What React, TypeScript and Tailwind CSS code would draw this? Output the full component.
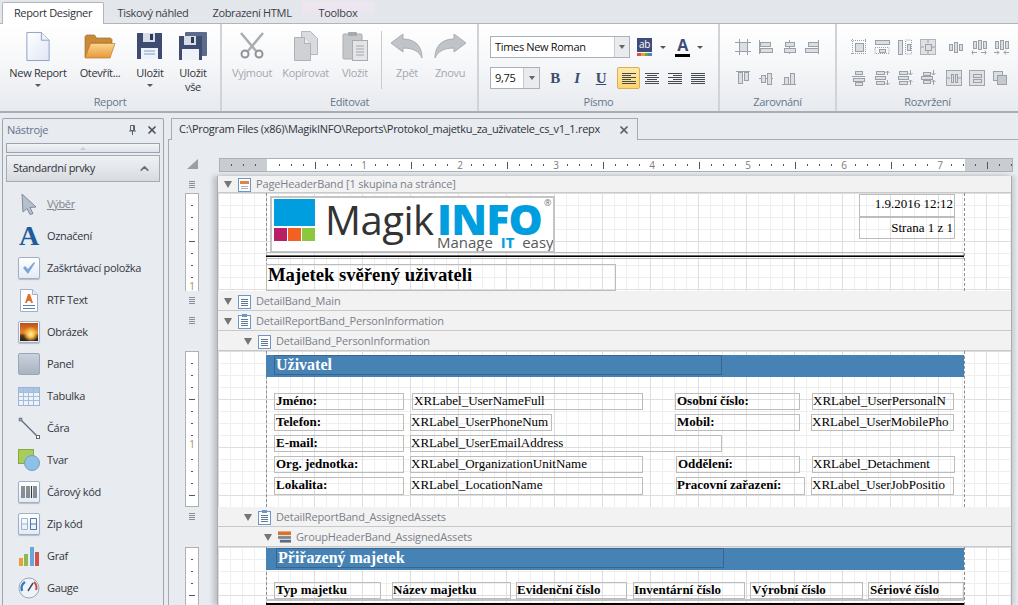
import React from "react"
import { ChevronUp, X } from "lucide-react"

const ui = "font-['Open_Sans','Noto_Sans',sans-serif]"
const serif = "font-['Liberation_Serif','Times_New_Roman',serif]"

// ---------- big ribbon icons ----------
const NewDoc = () => (
  <svg width="26" height="31" viewBox="0 0 26 32">
    <defs>
      <linearGradient id="nd" x1="0" y1="0" x2="1" y2="1">
        <stop offset="0" stopColor="#ffffff" />
        <stop offset="1" stopColor="#dfe6f5" />
      </linearGradient>
    </defs>
    <path d="M1.5 1.5h15l8 8v21h-23z" fill="url(#nd)" stroke="#8f9fc6" />
    <path d="M16.5 1.5v8h8" fill="#eef2fa" stroke="#8f9fc6" />
  </svg>
)

const Folder = () => (
  <svg width="32" height="26" viewBox="0 0 32 26">
    <defs>
      <linearGradient id="fo" x1="0" y1="0" x2="0" y2="1">
        <stop offset="0" stopColor="#fbd68d" />
        <stop offset="1" stopColor="#e8973a" />
      </linearGradient>
    </defs>
    <path d="M1 24V3.5L2.5 2h8l2 3h14l1.500 1.500V10H7z" fill="#c98a3a" stroke="#a86d24" strokeWidth=".7" />
    <path d="M1 25L6.500 10.500H31L26 25z" fill="url(#fo)" stroke="#b97a2c" strokeWidth=".7" />
  </svg>
)

const Floppy = ({ back }: { back?: boolean }) => (
  <svg width="28" height="28" viewBox="0 0 28 28">
    {back && <rect x="6" y="0" width="22" height="24" rx="1" fill="#5c6a8c" />}
    <path d={back ? "M0 4h23v24H0z" : "M1 1h25v26H1z"} fill="#3d4c70" />
    <rect x={back ? 5 : 7} y={back ? 4 : 1} width="12" height="9" fill="#d7dce6" />
    <rect x={back ? 12 : 14} y={back ? 5 : 2} width="3" height="6" fill="#2d3955" />
    <rect x={back ? 3 : 5} y={back ? 17 : 16} width="17" height="11" fill="#eef2f9" />
    {!back && <path d="M8 19h11M8 22h11" stroke="#7f9ccc" />}
  </svg>
)

const Scissors = () => (
  <svg width="28" height="28" viewBox="0 0 28 28" fill="none">
    <path d="M3 1l15 18M25 1L10 19" stroke="#a9adb2" strokeWidth="2.500" />
    <circle cx="7" cy="22" r="3.500" stroke="#8e9398" strokeWidth="2" />
    <circle cx="21" cy="22" r="3.500" stroke="#8e9398" strokeWidth="2" />
  </svg>
)

const CopyIcon = () => (
  <svg width="26" height="30" viewBox="0 0 26 30">
    <path d="M8.500 .5h9l7 7v16h-16z" fill="#d9dbde" stroke="#b4b7bb" />
    <path d="M1.500 6.500h10l6 6v17h-16z" fill="#cfd2d5" stroke="#aeb1b5" />
    <path d="M11.500 6.500v6h6" fill="#eceef0" stroke="#aeb1b5" />
  </svg>
)

const PasteIcon = () => (
  <svg width="26" height="30" viewBox="0 0 26 30">
    <rect x="1" y="3" width="19" height="25" rx="1" fill="#c5c8cb" stroke="#aaadb1" />
    <rect x="6" y="1" width="9" height="4" rx="1" fill="#a6a9ad" />
    <rect x="10.500" y="9.500" width="15" height="20" fill="#e3e5e7" stroke="#a8abaf" />
    <path d="M14 15h8M14 18h8M14 21h8M14 24h8" stroke="#a4a7ab" />
  </svg>
)

const Undo = ({ flip }: { flip?: boolean }) => (
  <svg width="32" height="24" viewBox="0 0 32 24" className={flip ? "-scale-x-100" : ""}>
    <path d="M0 9L12 0v5c12 0 19 7 19 19-3-7-9-10-19-10v4z" fill="#c0c3c7" stroke="#a9acb0" />
  </svg>
)

const BigBtn = ({ w, icon, label, line2, arrow, off }: { w: string; icon: React.ReactNode; label: string; line2?: string; arrow?: boolean; off?: boolean }) => (
  <div className={`${w} flex flex-col items-center ${off ? "text-[#a3a8af]" : "text-[#2f3338]"}`}>
    <div className="h-[32px] flex items-center justify-center">{icon}</div>
    <div className="mt-[4px] leading-[14px] whitespace-nowrap">{label}</div>
    {line2 && <div className="leading-[14px]">{line2}</div>}
    {arrow && <div className="mt-[4px] w-0 h-0 border-x-[3px] border-x-transparent border-t-[3px] border-t-[#555]" />}
  </div>
)

// ---------- small grey layout icons ----------
const B = ({ x, y, w, h }: { x: number; y: number; w: number; h: number }) => (
  <rect x={x + 0.5} y={y + 0.5} width={w} height={h} fill="#dcdfe2" stroke="#9aa0a7" />
)
const L = ({ d }: { d: string }) => <path d={d} stroke="#9aa0a7" fill="none" />
const Dots = ({ d }: { d: string }) => <path d={d} stroke="#9aa0a7" fill="none" strokeDasharray="1 1" />

const Small = ({ children }: { children: React.ReactNode }) => (
  <div className="w-[23px] flex justify-center">
    <svg width="16" height="16" viewBox="0 0 16 16">
      {children}
    </svg>
  </div>
)

const alignRow1 = [
  <><B x={4} y={3} w={8} h={9} /><L d="M0 3.500h16M0 12.500h16M4.500 0v16M12.500 0v16" /></>,
  <><L d="M1.500 1v14" /><B x={2} y={3} w={10} h={4} /><B x={2} y={9} w={12} h={4} /></>,
  <><L d="M8.500 1v14" /><B x={4} y={3} w={9} h={4} /><B x={3} y={9} w={11} h={4} /></>,
  <><L d="M14.500 1v14" /><B x={4} y={3} w={10} h={4} /><B x={1} y={9} w={13} h={4} /></>,
]
const alignRow2 = [
  <><L d="M1 1.500h14" /><B x={3} y={2} w={4} h={11} /><B x={9} y={2} w={4} h={8} /></>,
  <><L d="M1 8.500h14" /><B x={3} y={5} w={4} h={7} /><B x={9} y={3} w={4} h={11} /></>,
  <><L d="M1 14.500h14" /><B x={3} y={7} w={4} h={7} /><B x={9} y={3} w={4} h={11} /></>,
]
const layoutRow1 = [
  <><B x={4} y={4} w={8} h={8} /><Dots d="M0 1.500h16M0 14.500h16M1.500 0v16M14.500 0v16" /></>,
  <><B x={1} y={1} w={14} h={4} /><Dots d="M1 8.500h14v6H1z" /><B x={5} y={10} w={6} h={3} /></>,
  <><B x={1} y={1} w={4} h={14} /><Dots d="M8.500 1h6v14h-6z" /><B x={10} y={5} w={3} h={6} /></>,
  <><rect x=".5" y=".5" width="15" height="15" fill="#dfe1e4" stroke="#b0b4b9" /><B x={5} y={5} w={6} h={6} /><L d="M8 1v3M8 12v3M1 8h3M12 8h3" /></>,
  <><B x={1} y={5} w={3} h={6} /><B x={6} y={3} w={3} h={10} /><B x={11} y={5} w={3} h={6} /></>,
  <><B x={2} y={2} w={3} h={7} /><B x={7} y={1} w={3} h={9} /><B x={12} y={2} w={3} h={7} /><L d="M1 13.500h5M10 13.500h5M2 11.500l-1 2 1 2M14 11.500l1 2-1 2" /></>,
  <><B x={1} y={2} w={3} h={7} /><B x={6} y={1} w={3} h={9} /><B x={11} y={2} w={3} h={7} /><L d="M0 13.500h5M10 13.500h5M3 11.500l2 2-2 2M12 11.500l-2 2 2 2" /></>,
]
const layoutRow2 = [
  <><B x={4} y={1} w={7} h={3} /><L d="M1 6.500h13" /><B x={2} y={8} w={11} h={3} /><B x={4} y={12} w={7} h={3} /></>,
  <><B x={2} y={1} w={8} h={3} /><B x={1} y={6} w={10} h={3} /><B x={2} y={11} w={8} h={3} /><L d="M13.500 5V1M11.500 3l2-2 2 2M13.500 10v5M11.500 13l2 2 2-2" /></>,
  <><B x={2} y={1} w={8} h={3} /><B x={1} y={6} w={10} h={3} /><B x={2} y={11} w={8} h={3} /><L d="M13.500 0v5M11.500 3l2 2 2-2M13.500 15v-5M11.500 12l2-2 2 2" /></>,
  <><B x={3} y={2} w={7} h={3} /><B x={1} y={6} w={11} h={3} /><B x={3} y={10} w={7} h={3} /><L d="M13.500 0v5M11.500 3l2 2 2-2M13.500 15v-5M11.500 12l2-2 2 2" /></>,
  <><rect x=".5" y=".5" width="15" height="15" fill="#dfe1e4" stroke="#a0a5ab" /><B x={5} y={4} w={2} h={8} /><B x={9} y={4} w={2} h={8} /><L d="M1 8h3M12 8h3" /></>,
  <><rect x=".5" y=".5" width="15" height="15" fill="#dfe1e4" stroke="#a0a5ab" /><B x={4} y={4} w={8} h={3} /><B x={4} y={9} w={8} h={3} /></>,
  <><B x={1} y={1} w={9} h={9} /><rect x="5.500" y="5.500" width="9" height="9" fill="#c6cacf" stroke="#9aa0a7" /></>,
]

const FormatBtn = ({ children, active }: { children: React.ReactNode; active?: boolean }) => (
  <div className={`w-[23px] h-[22px] flex items-center justify-center ${active ? "bg-[linear-gradient(#ffe9a6,#fdd56e)] border border-[#d9ae5c] rounded-[2px]" : ""}`}>
    {children}
  </div>
)

const AlignLines = ({ rows }: { rows: string[] }) => (
  <svg width="14" height="11" viewBox="0 0 14 11">
    {rows.map((d, i) => (
      <path key={i} d={d} transform={`translate(0 ${i * 2 + 0.5})`} stroke="#444b55" fill="none" />
    ))}
  </svg>
)

const Group = ({ w, title, children, last }: { w: string; title: string; children: React.ReactNode; last?: boolean }) => (
  <div className={`${w} h-full flex flex-col justify-between ${last ? "" : "border-r-2 border-r-[#d0d4d9]"}`}>
    <div>{children}</div>
    <div className="h-[17px] text-center leading-[15px] text-[#66778a]">{title}</div>
  </div>
)

const Ribbon = () => (
  <div className="h-[89px] flex border-b-2 border-b-[#a9aeb5] bg-[linear-gradient(#ffffff,#f6f7f9_45%,#e7eaee)]">
    <Group w="w-[222px]" title="Report">
      <div className="flex pl-[4px] pt-[6px]">
        <BigBtn w="w-[68px]" icon={<NewDoc />} label="New Report" arrow />
        <BigBtn w="w-[56px]" icon={<Folder />} label="Otevřít..." />
        <BigBtn w="w-[44px]" icon={<Floppy />} label="Uložit" arrow />
        <BigBtn w="w-[42px]" icon={<Floppy back />} label="Uložit" line2="vše" />
      </div>
    </Group>
    <Group w="w-[257px]" title="Editovat">
      <div className="flex pl-[8px] pt-[6px] text-[#a3a8af]">
        <BigBtn w="w-[44px]" icon={<Scissors />} label="Vyjmout" off />
        <BigBtn w="w-[63px]" icon={<CopyIcon />} label="Kopírovat" off />
        <BigBtn w="w-[36px]" icon={<PasteIcon />} label="Vložit" off />
        <div className="ml-[8px] mr-[8px] mt-[1px] w-px h-[58px] bg-[#c8ccd1]" />
        <BigBtn w="w-[34px]" icon={<Undo />} label="Zpět" off />
        <BigBtn w="w-[52px]" icon={<Undo flip />} label="Znovu" off />
      </div>
    </Group>
    <Group w="w-[241px]" title="Písmo">
      <div className="pl-[11px] pt-[12px] flex flex-col gap-[9px]">
        <div className="h-[22px] flex items-center">
          <div className="w-[140px] h-[22px] flex bg-white border border-[#a9b0b9]">
            <div className="flex-1 pl-[4px] leading-[20px] text-[#111]">Times New Roman</div>
            <div className="w-[15px] border-l border-l-[#c5cad0] bg-[#e9ebee] flex items-center justify-center">
              <div className="w-0 h-0 border-x-[3px] border-x-transparent border-t-[4px] border-t-[#666]" />
            </div>
          </div>
          <div className="ml-[7px] w-[15px] h-[19px] flex flex-col">
            <div className="h-[14px] bg-[#3e4c7a] text-white text-[10px] leading-[13px] text-center">ab</div>
            <div className="mt-[1px] h-[3px] flex">
              <div className="flex-1 bg-[#d9534f]" />
              <div className="flex-1 bg-[#e9a13b]" />
              <div className="flex-1 bg-[#6aa84f]" />
              <div className="flex-1 bg-[#4a86c8]" />
            </div>
          </div>
          <div className="ml-[8px] w-0 h-0 border-x-[3px] border-x-transparent border-t-[3px] border-t-[#555]" />
          <div className="ml-[9px] w-[15px] h-[20px] flex flex-col items-center">
            <div className="h-[16px] text-[16px] leading-[16px] font-bold text-[#3e4c7a]">A</div>
            <div className="mt-[1px] w-full h-[3px] bg-black" />
          </div>
          <div className="ml-[7px] w-0 h-0 border-x-[3px] border-x-transparent border-t-[3px] border-t-[#555]" />
        </div>
        <div className="h-[22px] flex items-center">
          <div className="w-[50px] h-[22px] flex bg-white border border-[#a9b0b9]">
            <div className="flex-1 pl-[4px] leading-[20px] text-[#111]">9,75</div>
            <div className="w-[16px] border-l border-l-[#c5cad0] bg-[#e9ebee] flex items-center justify-center">
              <div className="w-0 h-0 border-x-[3px] border-x-transparent border-t-[4px] border-t-[#666]" />
            </div>
          </div>
          <div className={`ml-[4px] w-[22px] text-center text-[15px] font-bold text-[#3e4c6e] ${serif}`}>B</div>
          <div className={`w-[22px] text-center text-[15px] font-bold italic text-[#3e4c6e] ${serif}`}>I</div>
          <div className={`w-[26px] text-center text-[15px] font-bold underline text-[#3e4c6e] ${serif}`}>U</div>
          <div className="w-[3px]" />
          <FormatBtn active>
            <AlignLines rows={["M0 0h14", "M0 0h9", "M0 0h14", "M0 0h9", "M0 0h14", "M0 0h14"]} />
          </FormatBtn>
          <FormatBtn>
            <AlignLines rows={["M0 0h14", "M2 0h10", "M0 0h14", "M2 0h10", "M0 0h14", "M0 0h14"]} />
          </FormatBtn>
          <FormatBtn>
            <AlignLines rows={["M0 0h14", "M5 0h9", "M0 0h14", "M5 0h9", "M0 0h14", "M0 0h14"]} />
          </FormatBtn>
          <FormatBtn>
            <AlignLines rows={["M0 0h14", "M0 0h14", "M0 0h14", "M0 0h14", "M0 0h14", "M0 0h14"]} />
          </FormatBtn>
        </div>
      </div>
    </Group>
    <Group w="w-[117px]" title="Zarovnání">
      <div className="pl-[11px] pt-[12px] flex flex-col gap-[9px]">
        <div className="h-[22px] flex items-center">{alignRow1.map((c, i) => <Small key={i}>{c}</Small>)}</div>
        <div className="h-[22px] flex items-center">{alignRow2.map((c, i) => <Small key={i}>{c}</Small>)}</div>
      </div>
    </Group>
    <Group w="flex-1" title="Rozvržení" last>
      <div className="pl-[10px] pt-[12px] flex flex-col gap-[9px]">
        <div className="h-[22px] flex items-center">
          {layoutRow1.slice(0, 4).map((c, i) => <Small key={i}>{c}</Small>)}
          <div className="w-[5px]" />
          {layoutRow1.slice(4).map((c, i) => <Small key={i}>{c}</Small>)}
        </div>
        <div className="h-[22px] flex items-center">
          {layoutRow2.slice(0, 4).map((c, i) => <Small key={i}>{c}</Small>)}
          <div className="w-[3px]" />
          {layoutRow2.slice(4).map((c, i) => <Small key={i}>{c}</Small>)}
        </div>
      </div>
    </Group>
  </div>
)

// ---------- toolbox ----------
const ToolBoxFrame = ({ children }: { children: React.ReactNode }) => (
  <div className="w-[22px] h-[22px] rounded-[2px] border border-[#9fb0c8] bg-[linear-gradient(#ffffff,#e4ebf5)] flex items-center justify-center overflow-hidden shadow-[0_1px_1px_rgba(0,0,0,.2)]">
    {children}
  </div>
)

const tools: { label: string; icon: React.ReactNode; link?: boolean }[] = [
  {
    label: "Výběr",
    link: true,
    icon: (
      <svg width="16" height="22" viewBox="0 0 16 22">
        <path d="M1 1l14 13-6 .5 3 6-3 1-3-6L2 19z" fill="#b6bfcb" stroke="#7f8b9b" />
      </svg>
    ),
  },
  {
    label: "Označení",
    icon: <div className={`h-[24px] text-[28px] leading-[24px] font-bold text-[#1f5c9c] ${serif}`}>A</div>,
  },
  {
    label: "Zaškrtávací položka",
    icon: (
      <ToolBoxFrame>
        <svg width="16" height="16" viewBox="0 0 16 16">
          <path d="M2 8l2-2 3 3 6-7 1 1-7 11z" fill="#7ca5d8" />
        </svg>
      </ToolBoxFrame>
    ),
  },
  {
    label: "RTF Text",
    icon: (
      <svg width="18" height="23" viewBox="0 0 18 23">
        <path d="M.5 .5h12l5 5v17H.5z" fill="#fff" stroke="#9fb0c8" />
        <path d="M12.500 .5v5h5" fill="#e4ebf5" stroke="#9fb0c8" />
        <path d="M5 14l3-9h2l3 9h-2l-.6-2H7.600L7 14z" fill="#d9722b" />
        <path d="M3 16.500h12M3 19.500h12" stroke="#5b7fb5" />
      </svg>
    ),
  },
  {
    label: "Obrázek",
    icon: (
      <ToolBoxFrame>
        <div className="w-[18px] h-[18px] bg-[radial-gradient(circle_at_60%_62%,#fff3b0_0,#ffc44d_20%,transparent_50%),linear-gradient(#b8521c,#e8862c_55%,#5a3a18_70%,#2d2010)]" />
      </ToolBoxFrame>
    ),
  },
  {
    label: "Panel",
    icon: <div className="w-[22px] h-[22px] rounded-[2px] border border-[#9aa5b5] bg-[linear-gradient(#c9d1dc,#a9b3c1)]" />,
  },
  {
    label: "Tabulka",
    icon: (
      <svg width="22" height="19" viewBox="0 0 22 19">
        <rect x=".5" y=".5" width="21" height="18" fill="#eef3fa" stroke="#9db4d3" />
        <rect x="1" y="1" width="20" height="4" fill="#a8c6e8" />
        <path d="M1 5.500h20M1 9.500h20M1 13.500h20M5.500 1v17M10.500 1v17M15.500 1v17" stroke="#a5bcd9" />
      </svg>
    ),
  },
  {
    label: "Čára",
    icon: (
      <svg width="22" height="22" viewBox="0 0 22 22">
        <path d="M3 3l16 16" stroke="#5f6a78" strokeWidth="1.300" />
        <rect x="1" y="1" width="3" height="3" fill="#8d97a5" stroke="#5f6a78" strokeWidth=".5" />
        <rect x="18.500" y="18.500" width="3" height="3" fill="#fff" stroke="#5f6a78" />
      </svg>
    ),
  },
  {
    label: "Tvar",
    icon: (
      <svg width="22" height="22" viewBox="0 0 22 22">
        <rect x=".5" y=".5" width="15" height="14" fill="#a9cd5b" stroke="#88a83f" />
        <circle cx="14" cy="14" r="7.500" fill="#8fc0e6" stroke="#6d9fc9" />
      </svg>
    ),
  },
  {
    label: "Čárový kód",
    icon: (
      <ToolBoxFrame>
        <svg width="16" height="12" viewBox="0 0 16 12">
          <path d="M1 0v12M3 0v12M6 0v12M8 0v12M10.500 0v12M13 0v12M15 0v12" stroke="#33373d" strokeWidth="1.100" />
        </svg>
      </ToolBoxFrame>
    ),
  },
  {
    label: "Zip kód",
    icon: (
      <ToolBoxFrame>
        <svg width="18" height="14" viewBox="0 0 18 14" fill="none">
          <path d="M1.500 1.500h6v11h-6zM1.500 7h6" stroke="#9fb4d3" />
          <path d="M10.500 1.500h6v11h-6zM10.500 7h6" stroke="#4f77ad" />
        </svg>
      </ToolBoxFrame>
    ),
  },
  {
    label: "Graf",
    icon: (
      <svg width="22" height="21" viewBox="0 0 22 21">
        <rect x="1" y="12" width="4" height="8" fill="#ec9d3e" />
        <rect x="6" y="8" width="4" height="12" fill="#8db94e" />
        <rect x="12" y="1" width="4" height="19" fill="#6aa5da" />
        <rect x="17" y="6" width="4" height="14" fill="#d0524a" />
      </svg>
    ),
  },
  {
    label: "Gauge",
    icon: (
      <svg width="22" height="22" viewBox="0 0 22 22" fill="none">
        <circle cx="11" cy="11" r="10" fill="#eef3fa" stroke="#97a9c2" />
        <path d="M4 14a7.500 7.500 0 0 1 3-9" stroke="#3c78b8" strokeWidth="2.500" />
        <path d="M16 5a7.500 7.500 0 0 1 2 8" stroke="#c94a3f" strokeWidth="2" />
        <path d="M10 14L15 6" stroke="#3d4a5c" strokeWidth="1.500" />
      </svg>
    ),
  },
]

const ToolPanel = () => (
  <div className="w-[162px] h-full flex flex-col border-x border-t border-[#9fa5ad] rounded-t-[2px] text-[#33373d]">
    <div className="h-[24px] pb-[2px] flex items-center pl-[4px] pr-[5px] text-[#63728a]">
      <span className="flex-1">Nástroje</span>
      <svg width="9" height="11" viewBox="0 0 9 11" className="mr-[9px]" fill="none">
        <path d="M2.500 .5h4v5h-4zM1 6h7M4.500 6v4M5.500 1v4" stroke="#5b6675" />
      </svg>
      <X size={12} strokeWidth={3.500} className="text-[#4d5560]" />
    </div>
    <div className="mx-[3px] h-[10px] border border-[#9aa3ad] bg-[linear-gradient(#f2f4f6,#dfe3e8)] flex items-center justify-center">
      <div className="w-0 h-0 border-x-[3px] border-x-transparent border-b-[3px] border-b-[#c6cbd1]" />
    </div>
    <div className="mt-[2px] mx-[3px] h-[27px] border border-[#a4abb3] bg-[linear-gradient(#eff1f4,#d7dbe1)] flex items-center pl-[6px] pr-[8px]">
      <span className="flex-1 text-[#2f3338]">Standardní prvky</span>
      <ChevronUp size={13} strokeWidth={3} className="text-[#666d76]" />
    </div>
    <div className="mt-[6px] flex flex-col">
      {tools.map(t => (
        <div key={t.label} className="h-[32px] flex items-center">
          <div className="ml-[15px] w-[22px] flex justify-center shrink-0">{t.icon}</div>
          <span className={`ml-[7px] ${t.link ? "underline text-[#7d838c]" : ""}`}>{t.label}</span>
        </div>
      ))}
    </div>
  </div>
)

// ---------- rulers ----------
const TopRuler = () => (
  <div className="w-[794px] h-[14px] flex border border-[#adb1b7] bg-[linear-gradient(to_right,#c9ccd1_47px,#fff_47px,#fff_745px,#c9ccd1_745px)] overflow-hidden">
    {Array.from({ length: 66 }, (_, i) => {
      const p = -36 + 12 * i
      return (
        <div key={i} className="w-[12px] h-full shrink-0 flex items-center justify-end">
          {p === 0 ? null : p > 0 && p % 96 === 0 ? (
            <span className="w-[12px] text-center text-[10px] translate-x-[6px] leading-none text-[#7d7a80]">{p / 96}</span>
          ) : p % 48 === 0 ? (
            <div className="w-px h-[7px] bg-[#555]" />
          ) : (
            <div className="w-px h-[2px] bg-[#555]" />
          )}
        </div>
      )
    })}
  </div>
)

const SideRuler = ({ h, n }: { h: string; n: number }) => (
  <div className={`ml-[16px] w-[14px] ${h} border-x border-t border-[#adb1b7] bg-white overflow-hidden flex flex-col`}>
    {Array.from({ length: n }, (_, i) => {
      const p = i + 1
      return (
        <div key={i} className="h-[12px] shrink-0 flex items-end justify-center">
          {p % 8 === 0 ? (
            <span className="text-[10px] leading-[9px] text-[#b08a5a] translate-y-[1px]">{p / 8}</span>
          ) : p % 4 === 0 ? (
            <div className="w-[6px] h-px bg-[#555]" />
          ) : (
            <div className="w-[2px] h-px bg-[#555]" />
          )}
        </div>
      )
    })}
  </div>
)

const Burger = ({ h }: { h: string }) => (
  <div className={`${h} pl-[20px] flex items-center`}>
    <svg width="6" height="8" viewBox="0 0 6 8">
      <path d="M0 .5h6M0 2.500h6M0 4.500h6M0 6.500h6" stroke="#8a8f96" />
    </svg>
  </div>
)

// ---------- bands ----------
const BandGlyph = ({ kind }: { kind: "header" | "detail" | "report" | "group" }) => {
  if (kind === "group")
    return (
      <svg width="14" height="14" viewBox="0 0 14 14">
        <rect x="0" y="1" width="14" height="4" fill="#d9722b" />
        <rect x="0" y="6" width="14" height="3" fill="#7a8796" />
        <rect x="2" y="10" width="12" height="3" fill="#5d6b7b" />
      </svg>
    )
  return (
    <svg width="13" height="15" viewBox="0 0 13 15" fill="none">
      <rect x=".5" y="1.500" width="12" height="13" fill="#fdfdfe" stroke="#6f97c6" />
      {kind === "header" && <rect x="2" y="4" width="9" height="3" fill="#e0883a" />}
      {kind === "report" && <rect x="4" y="0" width="5" height="3" fill="#6f97c6" />}
      {kind !== "header" && <path d="M3 5.500h7M3 7.500h7M3 9.500h7M3 11.500h7" stroke="#5f7894" />}
      {kind === "header" && <path d="M3 9.500h7M3 11.500h7" stroke="#a7b6c6" />}
    </svg>
  )
}

const BandRow = ({ text, kind, pl, h = "h-[20px] pt-[1px]" }: { text: string; kind: "header" | "detail" | "report" | "group"; pl: string; h?: string }) => (
  <div className={`${h} ${pl} flex items-center bg-[#f2f2f2] border-b border-b-[#c9c9c9] text-[#7b7f8a]`}>
    <div className="w-0 h-0 border-x-[4px] border-x-transparent border-t-[7px] border-t-[#757575]" />
    <div className="ml-[6px] w-[13px] flex justify-center">
      <BandGlyph kind={kind} />
    </div>
    <span className="ml-[5px] whitespace-nowrap tracking-[-0.15px]">{text}</span>
  </div>
)

const gridBg =
  "bg-white bg-[linear-gradient(#dedede_1px,transparent_1px),linear-gradient(90deg,#dedede_1px,transparent_1px),linear-gradient(#efefef_1px,transparent_1px),linear-gradient(90deg,#efefef_1px,transparent_1px)] bg-[size:48px_48px,48px_48px,12px_12px,12px_12px]"

const Surface = ({ h, children }: { h: string; children: React.ReactNode }) => (
  <div className={`relative ${h} ${gridBg} overflow-hidden ${serif} tracking-normal text-[13px] text-black`}>
    <div className="absolute left-[48px] top-0 bottom-0 border-l border-dashed border-l-[#8f8f8f]" />
    <div className="absolute left-[746px] top-0 bottom-0 border-l border-dashed border-l-[#8f8f8f]" />
    {children}
  </div>
)

const XR = ({ pos, text, bold, cls }: { pos: string; text: string; bold?: boolean; cls?: string }) => (
  <div className={`absolute ${pos} border border-[#bcbcbc] whitespace-nowrap overflow-hidden leading-[14px] ${bold ? "font-bold" : ""} ${cls ?? ""}`}>
    {text}
  </div>
)

const Logo = () => (
  <div className={`absolute left-[52px] top-[3px] w-[285px] h-[57px] border-2 border-[#c4c4c4] bg-white overflow-hidden ${ui}`}>
    <div className="absolute left-[2px] top-[1px] w-[41px] h-[27px] bg-[#009ddf]" />
    <div className="absolute left-[2px] top-[30px] w-[13px] h-[13px] bg-[#b91f65]" />
    <div className="absolute left-[16px] top-[30px] w-[13px] h-[13px] bg-[#f26122]" />
    <div className="absolute left-[30px] top-[30px] w-[13px] h-[13px] bg-[#8dc63f]" />
    <span className="absolute left-[53px] top-[5px] text-[40px] leading-[33px] text-[#333333] tracking-[-0.5px]">Magik</span>
    <span className="absolute left-[165px] top-[4px] text-[43px] leading-[33px] font-extrabold text-[#009ddf] tracking-[-0.8px]">INFO</span>
    <span className="absolute left-[165px] top-[37px] text-[15px] leading-[14px] text-[#58595b] whitespace-pre">
      Manage  <b className="text-[#009ddf]">IT</b>  easy
    </span>
    <span className="absolute left-[272px] top-0 text-[9px] leading-[10px] text-[#777]">®</span>
  </div>
)

const Report = () => (
  <div className="w-[795px] shrink-0 flex flex-col border-x border-x-[#a8acb1] shadow-[-4px_0_5px_rgba(0,0,0,.18),3px_0_4px_rgba(0,0,0,.12)]">
    <BandRow text="PageHeaderBand [1 skupina na stránce]" kind="header" pl="pl-[6px]" h="h-[17px]" />
    <Surface h="h-[98px]">
      <Logo />
      <XR pos="left-[641px] top-[1px] w-[96px] h-[23px] pr-[1px] pt-[2px] text-right" text="1.9.2016 12:12" />
      <XR pos="left-[641px] top-[24px] w-[96px] h-[22px] pr-[1px] pt-[3px] text-right" text="Strana 1 z 1" />
      <div className="absolute left-[48px] top-[59px] w-[698px] h-[7px] border border-[#bcbcbc]" />
      <div className="absolute left-[48px] top-[63px] w-[698px] h-px bg-black" />
      <div className="absolute left-[48px] top-[62px] w-[698px] h-px bg-[#666]" />
      <XR pos="left-[48px] top-[71px] w-[350px] h-[27px] pl-[1px] text-[18.67px] leading-[20px]" text="Majetek svěřený uživateli" bold />
    </Surface>
    <BandRow text="DetailBand_Main" kind="detail" pl="pl-[6px]" />
    <BandRow text="DetailReportBand_PersonInformation" kind="report" pl="pl-[6px]" />
    <BandRow text="DetailBand_PersonInformation" kind="detail" pl="pl-[26px]" />
    <Surface h="h-[156px]">
      <div className="absolute left-[48px] top-[4px] w-[698px] h-[22px] bg-[#4682b4]" />
      <div className="absolute left-[56px] top-[4px] w-[448px] h-[20px] border border-[#38668f] pl-[1px] text-white font-bold text-[16px] leading-[18px]">Uživatel</div>
      <XR pos="left-[56px] top-[42px] w-[130px] h-[17px] pl-[1px]" text="Jméno:" bold />
      <XR pos="left-[194px] top-[42px] w-[231px] h-[17px] pl-[1px]" text="XRLabel_UserNameFull" />
      <XR pos="left-[56px] top-[63px] w-[130px] h-[17px] pl-[1px]" text="Telefon:" bold />
      <XR pos="left-[192px] top-[63px] w-[142px] h-[17px]" text="XRLabel_UserPhoneNum" />
      <XR pos="left-[56px] top-[84px] w-[130px] h-[17px] pl-[1px]" text="E-mail:" bold />
      <XR pos="left-[192px] top-[84px] w-[312px] h-[17px]" text="XRLabel_UserEmailAddress" />
      <XR pos="left-[56px] top-[105px] w-[130px] h-[17px] pl-[1px]" text="Org. jednotka:" bold />
      <XR pos="left-[192px] top-[105px] w-[233px] h-[17px]" text="XRLabel_OrganizationUnitName" />
      <XR pos="left-[56px] top-[126px] w-[130px] h-[18px] pl-[1px]" text="Lokalita:" bold />
      <XR pos="left-[192px] top-[126px] w-[233px] h-[18px]" text="XRLabel_LocationName" />
      <XR pos="left-[457px] top-[42px] w-[125px] h-[17px] pl-[1px]" text="Osobní číslo:" bold />
      <XR pos="left-[594px] top-[42px] w-[142px] h-[17px]" text="XRLabel_UserPersonalN" />
      <XR pos="left-[457px] top-[63px] w-[125px] h-[17px] pl-[1px]" text="Mobil:" bold />
      <XR pos="left-[593px] top-[63px] w-[143px] h-[17px]" text="XRLabel_UserMobilePho" />
      <XR pos="left-[458px] top-[105px] w-[124px] h-[17px] pl-[1px]" text="Oddělení:" bold />
      <XR pos="left-[594px] top-[105px] w-[143px] h-[17px]" text="XRLabel_Detachment" />
      <XR pos="left-[458px] top-[126px] w-[129px] h-[18px]" text="Pracovní zařazení:" bold />
      <XR pos="left-[593px] top-[126px] w-[143px] h-[18px]" text="XRLabel_UserJobPositio" />
    </Surface>
    <BandRow text="DetailReportBand_AssignedAssets" kind="report" pl="pl-[26px]" />
    <BandRow text="GroupHeaderBand_AssignedAssets" kind="group" pl="pl-[46px]" />
    <Surface h="flex-1 min-h-[58px]">
      <div className="absolute left-[48px] top-[1px] w-[698px] h-[22px] bg-[#4682b4]" />
      <div className="absolute left-[58px] top-[1px] w-[448px] h-[20px] border border-[#38668f] pl-[1px] text-white font-bold text-[16px] leading-[18px]">Přiřazený majetek</div>
      <XR pos="left-[56px] top-[35px] w-[107px] h-[17px] pl-[1px]" text="Typ majetku" bold />
      <XR pos="left-[174px] top-[35px] w-[119px] h-[17px]" text="Název majetku" bold />
      <XR pos="left-[298px] top-[35px] w-[111px] h-[17px]" text="Evidenční číslo" bold />
      <XR pos="left-[415px] top-[35px] w-[112px] h-[17px]" text="Inventární číslo" bold />
      <XR pos="left-[532px] top-[35px] w-[113px] h-[17px] pl-[1px]" text="Výrobní číslo" bold />
      <XR pos="left-[650px] top-[35px] w-[96px] h-[17px] pl-[1px]" text="Sériové číslo" bold />
      <div className="absolute left-[48px] top-[52px] w-[698px] h-[2px] bg-[#c4c4c4]" />
      <div className="absolute left-[48px] top-[56px] w-[698px] h-[2px] bg-black" />
    </Surface>
  </div>
)

const Gutter = () => (
  <div className="w-[48px] shrink-0 flex flex-col">
    <Burger h="h-[17px]" />
    <SideRuler h="h-[98px]" n={9} />
    <Burger h="h-[20px]" />
    <Burger h="h-[20px]" />
    <div className="h-[20px]" />
    <SideRuler h="h-[156px] border-b" n={13} />
    <Burger h="h-[20px]" />
    <div className="h-[20px]" />
    <SideRuler h="h-[58px]" n={5} />
  </div>
)

const DocumentArea = () => (
  <div className="flex-1 min-w-0 h-full flex flex-col ml-[4px]">
    <div className="h-[22px] flex pl-[3px] -mb-px relative">
      <div className="w-[467px] flex items-center pl-[7px] pr-[7px] border-x border-t border-[#a5abb3] bg-[#e8ebf0] text-[#2f3338]">
        <span className="flex-1 whitespace-nowrap tracking-[-0.29px]">C:\Program Files (x86)\MagikINFO\Reports\Protokol_majetku_za_uživatele_cs_v1_1.repx</span>
        <X size={12} strokeWidth={3.500} className="text-[#5b6068]" />
      </div>
    </div>
    <div className="flex-1 min-h-0 border-l border-t border-[#a5abb3] flex flex-col overflow-hidden">
      <div className="mt-[18px] h-[14px] flex shrink-0">
        <div className="w-[50px] pl-[18px] shrink-0">
          <svg width="11" height="11" viewBox="0 0 11 11">
            <path d="M11 1v10H0z" fill="#9a9fa6" />
          </svg>
        </div>
        <TopRuler />
      </div>
      <div className="mt-[4px] flex-1 min-h-0 flex">
        <Gutter />
        <Report />
      </div>
    </div>
  </div>
)

export default function App() {
  return (
    <div className={`w-[1018px] h-[605px] overflow-hidden flex flex-col bg-[#e8ebf0] text-[11px] tracking-[-0.33px] ${ui}`}>
      <div className="h-[24px] pt-[2px] pl-[2px] flex border-b border-b-[#b0b5bb] bg-[#e3e6ea] text-[#3b4047] relative">
        <div className="w-[102px] h-[22px] flex items-center justify-center bg-white border-x border-t border-[#b0b5bb] rounded-t-[2px] text-[#2f3338]">Report Designer</div>
        <div className="w-[98px] text-center leading-[21px]">Tiskový náhled</div>
        <div className="w-[100px] text-center leading-[21px]">Zobrazení HTML</div>
        <div className="w-[72px] text-center leading-[21px] bg-[linear-gradient(#f0e6f2,#e3e6ea)]">Toolbox</div>
      </div>
      <Ribbon />
      <div className="flex-1 min-h-0 flex pt-[5px] pl-[2px]">
        <ToolPanel />
        <DocumentArea />
      </div>
    </div>
  )
}
